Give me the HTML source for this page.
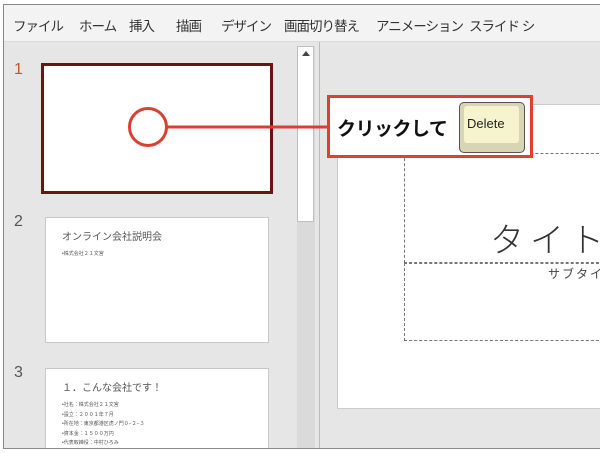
<!DOCTYPE html>
<html><head><meta charset="utf-8"><style>
*{margin:0;padding:0;box-sizing:border-box}
body{width:600px;height:453px;background:#fff;position:relative;overflow:hidden;font-family:"Liberation Sans","Noto Sans CJK JP",sans-serif}
.a{position:absolute}
.frame{left:3px;top:4px;width:600px;height:445px;border:1.5px solid #888;background:#e6e6e6;overflow:hidden}
.menu{left:0;top:0;width:600px;height:37px;background:#f3f3f3;border-bottom:1px solid #ddd;font-size:13.5px;color:#333;letter-spacing:-1px}
.menu span{position:absolute;top:10px;white-space:nowrap}
.num{font-size:16px;color:#555}
.thumb{background:#fff;border:1px solid #c8c8c8}
.t{color:#555;white-space:nowrap}
</style></head><body>
<div class="a frame">
 <div class="a menu">
  <span style="left:9px">ファイル</span><span style="left:75px">ホーム</span><span style="left:125px">挿入</span><span style="left:172px">描画</span><span style="left:217px">デザイン</span><span style="left:280px">画面切り替え</span><span style="left:372px">アニメーション</span><span style="left:465px">スライド シ</span>
 </div>
 <div class="a" style="left:293px;top:41px;width:18px;height:404px;background:#dadada"></div>
 <div class="a" style="left:293px;top:41px;width:17px;height:176px;background:#fff;border:1px solid #c0c0c0"></div>
 <div class="a" style="left:298px;top:46px;width:0;height:0;border-left:4px solid transparent;border-right:4px solid transparent;border-bottom:5px solid #444"></div>
 <div class="a" style="left:315px;top:37px;width:1px;height:410px;background:#bbb"></div>
 <div class="a" style="left:333px;top:99px;width:270px;height:305px;background:#fff;border:1px solid #ccc"></div>
 <div class="a" style="left:400px;top:148px;width:200px;height:110px;border:1px dashed #777"></div>
 <div class="a" style="left:400px;top:258px;width:200px;height:78px;border:1px dashed #777"></div>
 <div class="a t" style="left:486px;top:208px;font-size:34px;color:#333;font-weight:300;letter-spacing:6px">タイト</div>
 <div class="a t" style="left:544px;top:260px;font-size:12px;color:#444;letter-spacing:2px">サブタイ</div>
 <div class="a num" style="left:10px;top:56px;color:#c4552f">1</div>
 <div class="a" style="left:37px;top:58px;width:232px;height:131px;background:#fff;border:3px solid #6b1414"></div>
 <div class="a num" style="left:10px;top:208px">2</div>
 <div class="a thumb" style="left:41px;top:212px;width:224px;height:126px">
  <div class="a t" style="left:16px;top:10px;font-size:10px">オンライン会社説明会</div>
  <div class="a t" style="left:16px;top:32px;font-size:5px">•株式会社２１文宮</div>
 </div>
 <div class="a num" style="left:10px;top:359px">3</div>
 <div class="a thumb" style="left:41px;top:363px;width:224px;height:90px">
  <div class="a t" style="left:16px;top:10px;font-size:10px">１．こんな会社です！</div>
  <div class="a t" style="left:16px;top:32px;font-size:5px;line-height:9.5px">•社名：株式会社２１文宮<br>•設立：２００１年７月<br>•所在地：東京都港区虎ノ門０−２−３<br>•資本金：１５００万円<br>•代表取締役：中村ひろみ</div>
 </div>
</div>
<svg class="a" style="left:0;top:0" width="600" height="453">
 <circle cx="148" cy="127" r="18.5" fill="none" stroke="#d9402f" stroke-width="3"/>
 <line x1="167" y1="127" x2="328" y2="127" stroke="#d9402f" stroke-width="3"/>
</svg>
<div class="a" style="left:327px;top:95px;width:206px;height:63px;background:#fff;border:3px solid #e0402f"></div>
<div class="a" style="left:337px;top:114px;font-size:19px;font-weight:bold;color:#111;white-space:nowrap;letter-spacing:-0.5px">クリックして</div>
<div class="a" style="left:459px;top:102px;width:66px;height:51px;background:#d8d4b4;border:1px solid #555;border-radius:5px"></div>
<div class="a" style="left:464px;top:106px;width:55px;height:37px;background:#f6f3cf;border-radius:3px"></div>
<div class="a" style="left:467px;top:116px;font-size:13px;color:#222">Delete</div>
</body></html>
